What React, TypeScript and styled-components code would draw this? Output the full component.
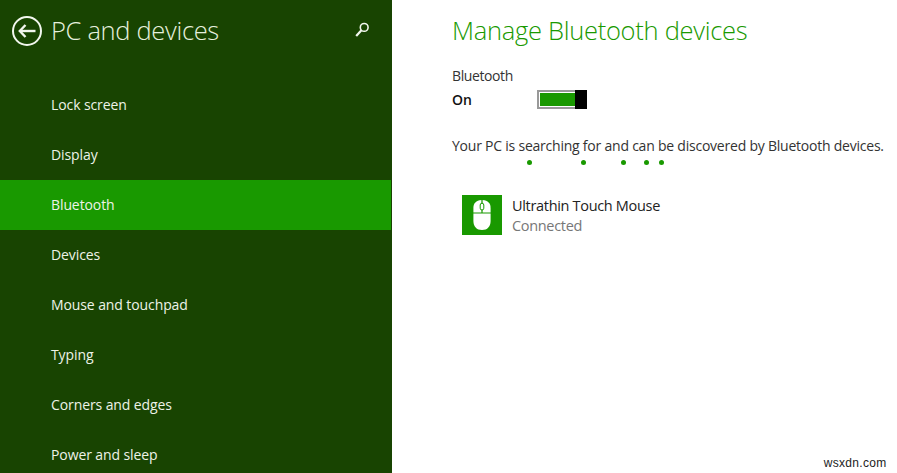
import styled, { createGlobalStyle } from "styled-components";

const menuItems = [
  "Lock screen",
  "Display",
  "Bluetooth",
  "Devices",
  "Mouse and touchpad",
  "Typing",
  "Corners and edges",
  "Power and sleep",
];

const dotOffsets = [0, 49, 35, 18, 10];

const App = () => {
  return (
    <Page>
      <GlobalStyle />
      <Sidebar>
        <SidebarHeader>
          <BackIcon width="32" height="32" viewBox="0 0 32 32">
            <circle cx="16" cy="16" r="14" fill="none" stroke="#f2f7ee" strokeWidth="2" />
            <path d="M14.5 10 L8.8 16 L14.5 22" fill="none" stroke="#f2f7ee" strokeWidth="2.4" />
            <path d="M9.5 16 H24.5" fill="none" stroke="#f2f7ee" strokeWidth="2.4" />
          </BackIcon>
          <SidebarTitle>PC and devices</SidebarTitle>
          <SearchIcon width="18" height="18" viewBox="0 0 18 18">
            <circle cx="10.2" cy="5.4" r="3.9" fill="none" stroke="#f2f7ee" strokeWidth="1.6" />
            <path d="M7.4 8.2 L2.2 14" fill="none" stroke="#f2f7ee" strokeWidth="2.2" />
          </SearchIcon>
        </SidebarHeader>
        <Menu>
          {menuItems.map((item) => (
            <MenuItem key={item} $active={item === "Bluetooth"}>
              {item}
            </MenuItem>
          ))}
        </Menu>
      </Sidebar>

      <Content>
        <Heading>Manage Bluetooth devices</Heading>
        <SettingLabel>Bluetooth</SettingLabel>
        <ToggleRow>
          <ToggleValue>On</ToggleValue>
          <Toggle>
            <ToggleFill />
            <ToggleThumb />
          </Toggle>
        </ToggleRow>
        <StatusText>Your PC is searching for and can be discovered by Bluetooth devices.</StatusText>
        <Dots>
          {dotOffsets.map((offset, idx) => (
            <Dot key={idx} $offset={offset} />
          ))}
        </Dots>
        <Device>
          <DeviceTile>
            <svg width="18" height="30" viewBox="0 0 18 30">
              <path d="M8.4 0 V12.4 H0.4 V8 C0.4 3.4 3 0.4 8.4 0 Z" fill="#fff" />
              <path d="M9.6 0 C15 0.4 17.6 3.4 17.6 8 V12.4 H9.6 Z" fill="#fff" />
              <path d="M0.4 13.6 H17.6 V21 C17.6 26.6 14.4 30 9 30 C3.6 30 0.4 26.6 0.4 21 Z" fill="#fff" />
              <rect x="7.2" y="3.2" width="3.6" height="6.8" rx="1.8" fill="#fff" stroke="#199900" strokeWidth="1" />
            </svg>
          </DeviceTile>
          <DeviceText>
            <DeviceName>Ultrathin Touch Mouse</DeviceName>
            <DeviceStatus>Connected</DeviceStatus>
          </DeviceText>
        </Device>
        <Watermark>wsxdn.com</Watermark>
      </Content>
    </Page>
  );
};

export default App;

const GlobalStyle = createGlobalStyle`
  html, body {
    margin: 0;
    padding: 0;
    background: #fff;
  }

  body {
    font-family: "Open Sans", "Noto Sans", sans-serif;
  }
`;

const Page = styled.div`
  width: 897px;
  height: 473px;
  display: flex;
  overflow: hidden;
`;

const Sidebar = styled.aside`
  width: 392px;
  height: 473px;
  flex-shrink: 0;
  background: #184401;
  display: flex;
  flex-direction: column;
`;

const SidebarHeader = styled.header`
  height: 80px;
  flex-shrink: 0;
  display: flex;
  align-items: flex-start;
  padding: 15px 0 0 11px;
  box-sizing: border-box;
`;

const BackIcon = styled.svg`
  flex-shrink: 0;
`;

const SidebarTitle = styled.h1`
  margin: -3px 0 0 8px;
  font-size: 25.5px;
  line-height: 36px;
  font-weight: 300;
  letter-spacing: -0.32px;
  color: #e6f0de;
  white-space: nowrap;
`;

const SearchIcon = styled.svg`
  margin: 7px 20px 0 auto;
`;

const Menu = styled.nav`
  display: flex;
  flex-direction: column;
`;

const MenuItem = styled.div<{ $active: boolean }>`
  height: 50px;
  flex-shrink: 0;
  width: ${({ $active }) => ($active ? "391px" : "auto")};
  display: flex;
  align-items: center;
  padding: 0 0 2px 51px;
  font-size: 14px;
  letter-spacing: -0.1px;
  color: #edf3e8;
  background: ${({ $active }) => ($active ? "#199900" : "transparent")};
  box-sizing: border-box;
`;

const Content = styled.main`
  flex: 1;
  display: flex;
  flex-direction: column;
  padding: 12px 0 0 60px;
  position: relative;
  min-width: 0;
`;

const Heading = styled.h2`
  margin: 0;
  font-size: 25.5px;
  line-height: 36px;
  font-weight: 300;
  letter-spacing: -0.28px;
  color: #199900;
  white-space: nowrap;
`;

const SettingLabel = styled.div`
  margin-top: 18px;
  font-size: 14px;
  line-height: 19px;
  letter-spacing: -0.4px;
  color: #333;
`;

const ToggleRow = styled.div`
  display: flex;
  align-items: center;
  margin-top: 5px;
  height: 19px;
`;

const ToggleValue = styled.div`
  width: 85px;
  font-size: 14px;
  font-weight: 600;
  color: #111;
`;

const Toggle = styled.div`
  width: 50px;
  height: 19px;
  display: flex;
`;

const ToggleFill = styled.div`
  flex: 1;
  box-sizing: border-box;
  border: 2px solid #999;
  border-right: none;
  padding: 1px 0 1px 1px;
  background: #199900 content-box;
`;

const ToggleThumb = styled.div`
  width: 12px;
  background: #000;
`;

const StatusText = styled.p`
  margin: 27px 0 0;
  font-size: 14px;
  line-height: 19px;
  letter-spacing: -0.225px;
  color: #333;
  white-space: nowrap;
`;

const Dots = styled.div`
  display: flex;
  margin: 5px 0 0 75px;
  height: 5px;
`;

const Dot = styled.span<{ $offset: number }>`
  width: 5px;
  height: 5px;
  margin-left: ${({ $offset }) => $offset}px;
  border-radius: 50%;
  background: #199900;
`;

const Device = styled.div`
  display: flex;
  align-items: flex-start;
  margin: 30px 0 0 10px;
`;

const DeviceTile = styled.div`
  width: 40px;
  height: 40px;
  background: #199900;
  display: flex;
  align-items: center;
  justify-content: center;
`;

const DeviceText = styled.div`
  display: flex;
  flex-direction: column;
  margin: 1px 0 0 10px;
`;

const DeviceName = styled.div`
  font-size: 14.5px;
  line-height: 20px;
  letter-spacing: -0.32px;
  color: #222;
`;

const DeviceStatus = styled.div`
  font-size: 14.5px;
  line-height: 20px;
  letter-spacing: -0.32px;
  color: #777;
`;

const Watermark = styled.div`
  position: absolute;
  right: 10.5px;
  bottom: 3px;
  font-family: "Liberation Sans", sans-serif;
  font-size: 12px;
  letter-spacing: 0.3px;
  color: #222;
`;
